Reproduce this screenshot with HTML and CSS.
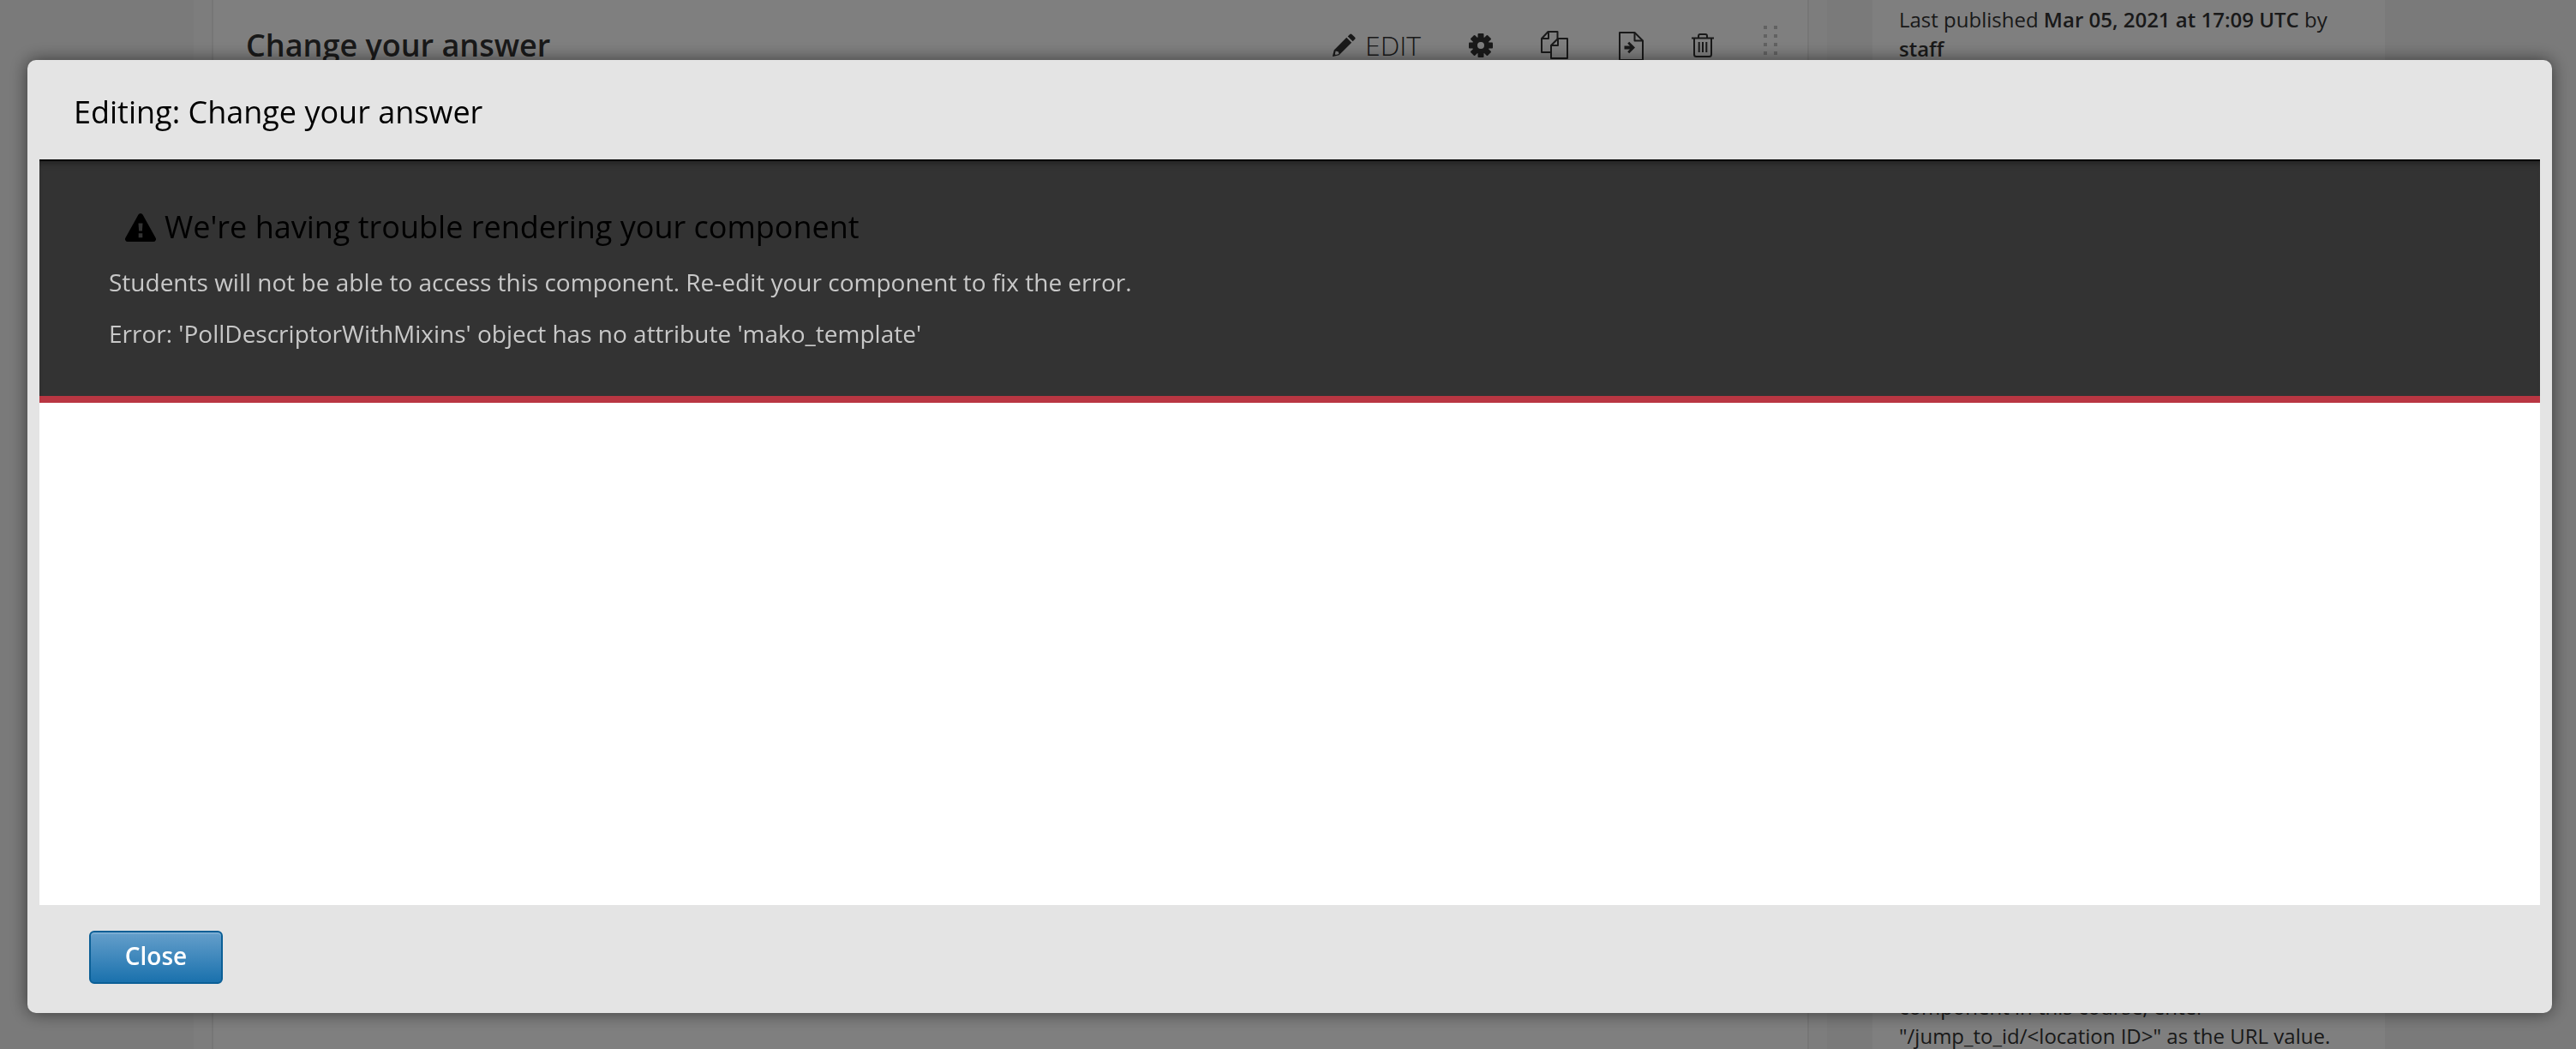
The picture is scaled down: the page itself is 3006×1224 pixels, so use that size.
FILE: index.html
```html
<!DOCTYPE html>
<html lang="en">
<head>
<meta charset="utf-8">
<title>Editing: Change your answer</title>
<link rel="stylesheet" href="styles.css">
</head>
<body>
<div class="page">
  <main class="main-col">
    <section class="card">
      <h3 class="card-title">Change your answer</h3>
      <div class="actions">
        <span class="edit">
          <svg class="ic-pencil" viewBox="0 0 27 27"><path d="M20.2 0.9a1.6 1.6 0 0 1 2.2 0l3.7 3.7a1.6 1.6 0 0 1 0 2.2l-2.5 2.5-5.9-5.9zM16.3 4.8l5.9 5.9L7.6 25.3 0.4 27 0 26.6l1.7-7.2zM3.7 20.4l-1 3.9 1.2 0.8 3.6-1-0.6-2.5z" fill="#333" fill-rule="evenodd"/></svg>
          <span class="edit-label">EDIT</span>
        </span>
        <svg class="ic-gear" viewBox="0 0 28 28"><g fill="#333"><rect x="10.5" y="0" width="7" height="7" rx="1"/><rect x="10.5" y="0" width="7" height="7" rx="1" transform="rotate(45 14 14)"/><rect x="10.5" y="0" width="7" height="7" rx="1" transform="rotate(90 14 14)"/><rect x="10.5" y="0" width="7" height="7" rx="1" transform="rotate(135 14 14)"/><rect x="10.5" y="0" width="7" height="7" rx="1" transform="rotate(180 14 14)"/><rect x="10.5" y="0" width="7" height="7" rx="1" transform="rotate(225 14 14)"/><rect x="10.5" y="0" width="7" height="7" rx="1" transform="rotate(270 14 14)"/><rect x="10.5" y="0" width="7" height="7" rx="1" transform="rotate(315 14 14)"/></g><circle cx="14" cy="14" r="7" fill="none" stroke="#333" stroke-width="6"/></svg>
        <svg class="ic-copy" viewBox="0 0 32 33"><g fill="none" stroke="#333" stroke-width="2" stroke-linejoin="round"><path d="M19.5 9V1H8.5L1 9v16h11"/><path d="M9 1v8H1"/><path d="M31 9H20l-8 8v15h19z"/><path d="M20 9v8h-8"/></g></svg>
        <svg class="ic-doc" viewBox="0 0 29 34"><g fill="none" stroke="#333" stroke-width="2" stroke-linejoin="round"><path d="M1 1h17.5L28 10.5V33H1z"/><path d="M18.5 1v9.5H28"/></g><path d="M6.5 16.5h6.5l-2.800-2.800 2-2 6.800 6.800-6.800 6.800-2-2 2.800-2.800H6.5z" fill="#333"/></svg>
        <svg class="ic-trash" viewBox="0 0 26 28"><g fill="none" stroke="#333" stroke-width="2" stroke-linejoin="round"><path d="M0 5.5h26"/><path d="M8 5V3a2 2 0 0 1 2-2h6a2 2 0 0 1 2 2v2"/><path d="M3 5.5v19a2.5 2.5 0 0 0 2.5 2.500h15a2.500 2.500 0 0 0 2.500-2.500v-19"/></g><path d="M7.7 10h2v12h-2zM12 10h2v12h-2zM16.300 10h2v12h-2z" fill="#333"/></svg>
        <span class="dots"><i></i><i></i><i></i><i></i><i></i><i></i><i></i><i></i><i></i><i></i></span>
      </div>
    </section>
  </main>
  <aside class="sidebar">
    <p class="side-text">Last published <b>Mar 05, 2021 at 17:09 UTC</b> by <b>staff</b></p>
    <p class="side-text">component in this course, enter "/jump_to_id/&lt;location ID&gt;" as the URL value.</p>
  </aside>
</div>
<div class="backdrop"></div>
<div class="modal" role="dialog">
  <header class="modal-head">
    <h2 class="modal-title">Editing: Change your answer</h2>
  </header>
  <div class="modal-body">
    <div class="error">
      <h3 class="error-title">
        <svg class="ic-warn" viewBox="0 0 36 33"><path fill-rule="evenodd" d="M15.4 1.6a3 3 0 0 1 5.2 0l15 26.900a3 3 0 0 1-2.600 4.500H3a3 3 0 0 1-2.600-4.500zM15.5 11.5l0.6 9h3.800l0.6-9zM15.700 23.200v5h4.600v-5z" fill="#000"/></svg>
        <span>We're having trouble rendering your component</span>
      </h3>
      <p class="error-text">Students will not be able to access this component. Re-edit your component to fix the error.</p>
      <p class="error-text">Error: 'PollDescriptorWithMixins' object has no attribute 'mako_template'</p>
    </div>
  </div>
  <footer class="modal-foot">
    <button class="btn" type="button">Close</button>
  </footer>
</div>
</body>
</html>
```
FILE: styles.css
```css
* { box-sizing: border-box; }
html, body { margin: 0; height: 100%; }
body {
  width: 3006px;
  height: 1224px;
  overflow: hidden;
  background: #f5f5f5;
  font-family: "Open Sans", "Noto Sans", sans-serif;
  color: #3c3c3c;
}
.page {
  display: flex;
  height: 1224px;
  padding-left: 226px;
}
.main-col {
  width: 1906px;
  background: #fafafa;
  padding: 0 21px;
}
.card {
  height: 1240px;
  padding: 28px 0 0 38px;
  background: #fff;
  border: 2px solid #ececec;
  border-top: 0;
  display: flex;
  justify-content: space-between;
  align-items: flex-start;
}
.card-title {
  margin: 0;
  font-size: 36px;
  line-height: 50px;
  font-weight: 600;
  color: #333;
}
.actions {
  position: relative;
  width: 554px;
  height: 60px;
}
.actions > * { position: absolute; }
.edit { left: 0; top: 0; }
.ic-pencil { position: absolute; left: 0; top: 11px; width: 27px; height: 27px; }
.edit-label {
  position: absolute;
  left: 38px;
  top: 3px;
  font-size: 32px;
  line-height: 44px;
  font-weight: 300;
  color: #333;
}
.ic-gear { left: 159px; top: 11px; width: 28px; height: 28px; }
.ic-copy { left: 243px; top: 8px; width: 32px; height: 33px; }
.ic-doc { left: 334px; top: 9px; width: 29px; height: 34px; }
.ic-trash { left: 419px; top: 11px; width: 26px; height: 28px; }
.dots {
  left: 503px;
  top: 2px;
  width: 16px;
  display: grid;
  grid-template-columns: 4px 4px;
  justify-content: space-between;
  row-gap: 6px;
}
.dots i { display: block; height: 4px; background: #c4c4c4; }
.sidebar {
  width: 598px;
  margin-left: 53px;
  padding: 6px 32px 0 31px;
  height: 1226px;
  background: #fff;
  display: flex;
  flex-direction: column;
  justify-content: space-between;
}
.side-text {
  margin: 0;
  font-size: 24px;
  line-height: 34px;
  color: #333;
}
.side-text b { font-weight: 600; }
.backdrop {
  position: fixed;
  inset: 0;
  background: rgba(0, 0, 0, 0.5);
}
.modal {
  position: fixed;
  left: 32px;
  top: 70px;
  width: 2946px;
  height: 1112px;
  display: flex;
  flex-direction: column;
  background: #e4e4e4;
  border-radius: 10px;
  box-shadow: 0 0 20px rgba(0, 0, 0, 0.55);
}
.modal-head {
  height: 116px;
  padding: 6px 54px 0;
  display: flex;
  align-items: center;
}
.modal-title {
  margin: 0;
  font-size: 36px;
  line-height: 50px;
  font-weight: 400;
  color: #000;
}
.modal-body {
  height: 870px;
  margin: 0 14px;
  background: #fff;
}
.error {
  height: 284px;
  padding: 52px 81px 0;
  background: #333;
  border-top: 2px solid #000;
  border-bottom: 8px solid #b93642;
  box-shadow: inset 0 8px 8px -6px rgba(0, 0, 0, 0.4);
}
.error-title {
  margin: 0 0 19px;
  padding-left: 19px;
  display: flex;
  align-items: center;
  gap: 10px;
  font-size: 36px;
  line-height: 50px;
  font-weight: 400;
  color: #000;
}
.ic-warn { width: 36px; height: 33px; flex: none; }
.error-text {
  margin: 0 0 20px;
  font-size: 28px;
  line-height: 40px;
  color: #c8c8c8;
}
.modal-foot {
  flex: 1;
  padding: 30px 72px;
}
.btn {
  display: block;
  width: 156px;
  height: 62px;
  padding: 0 0 4px;
  border: 2px solid #0b5f96;
  border-radius: 6px;
  background: linear-gradient(#659fcb, #1a71ad);
  box-shadow: inset 0 2px 0 rgba(255, 255, 255, 0.15);
  font-family: inherit;
  font-size: 28px;
  font-weight: 600;
  color: #fff;
}
```
